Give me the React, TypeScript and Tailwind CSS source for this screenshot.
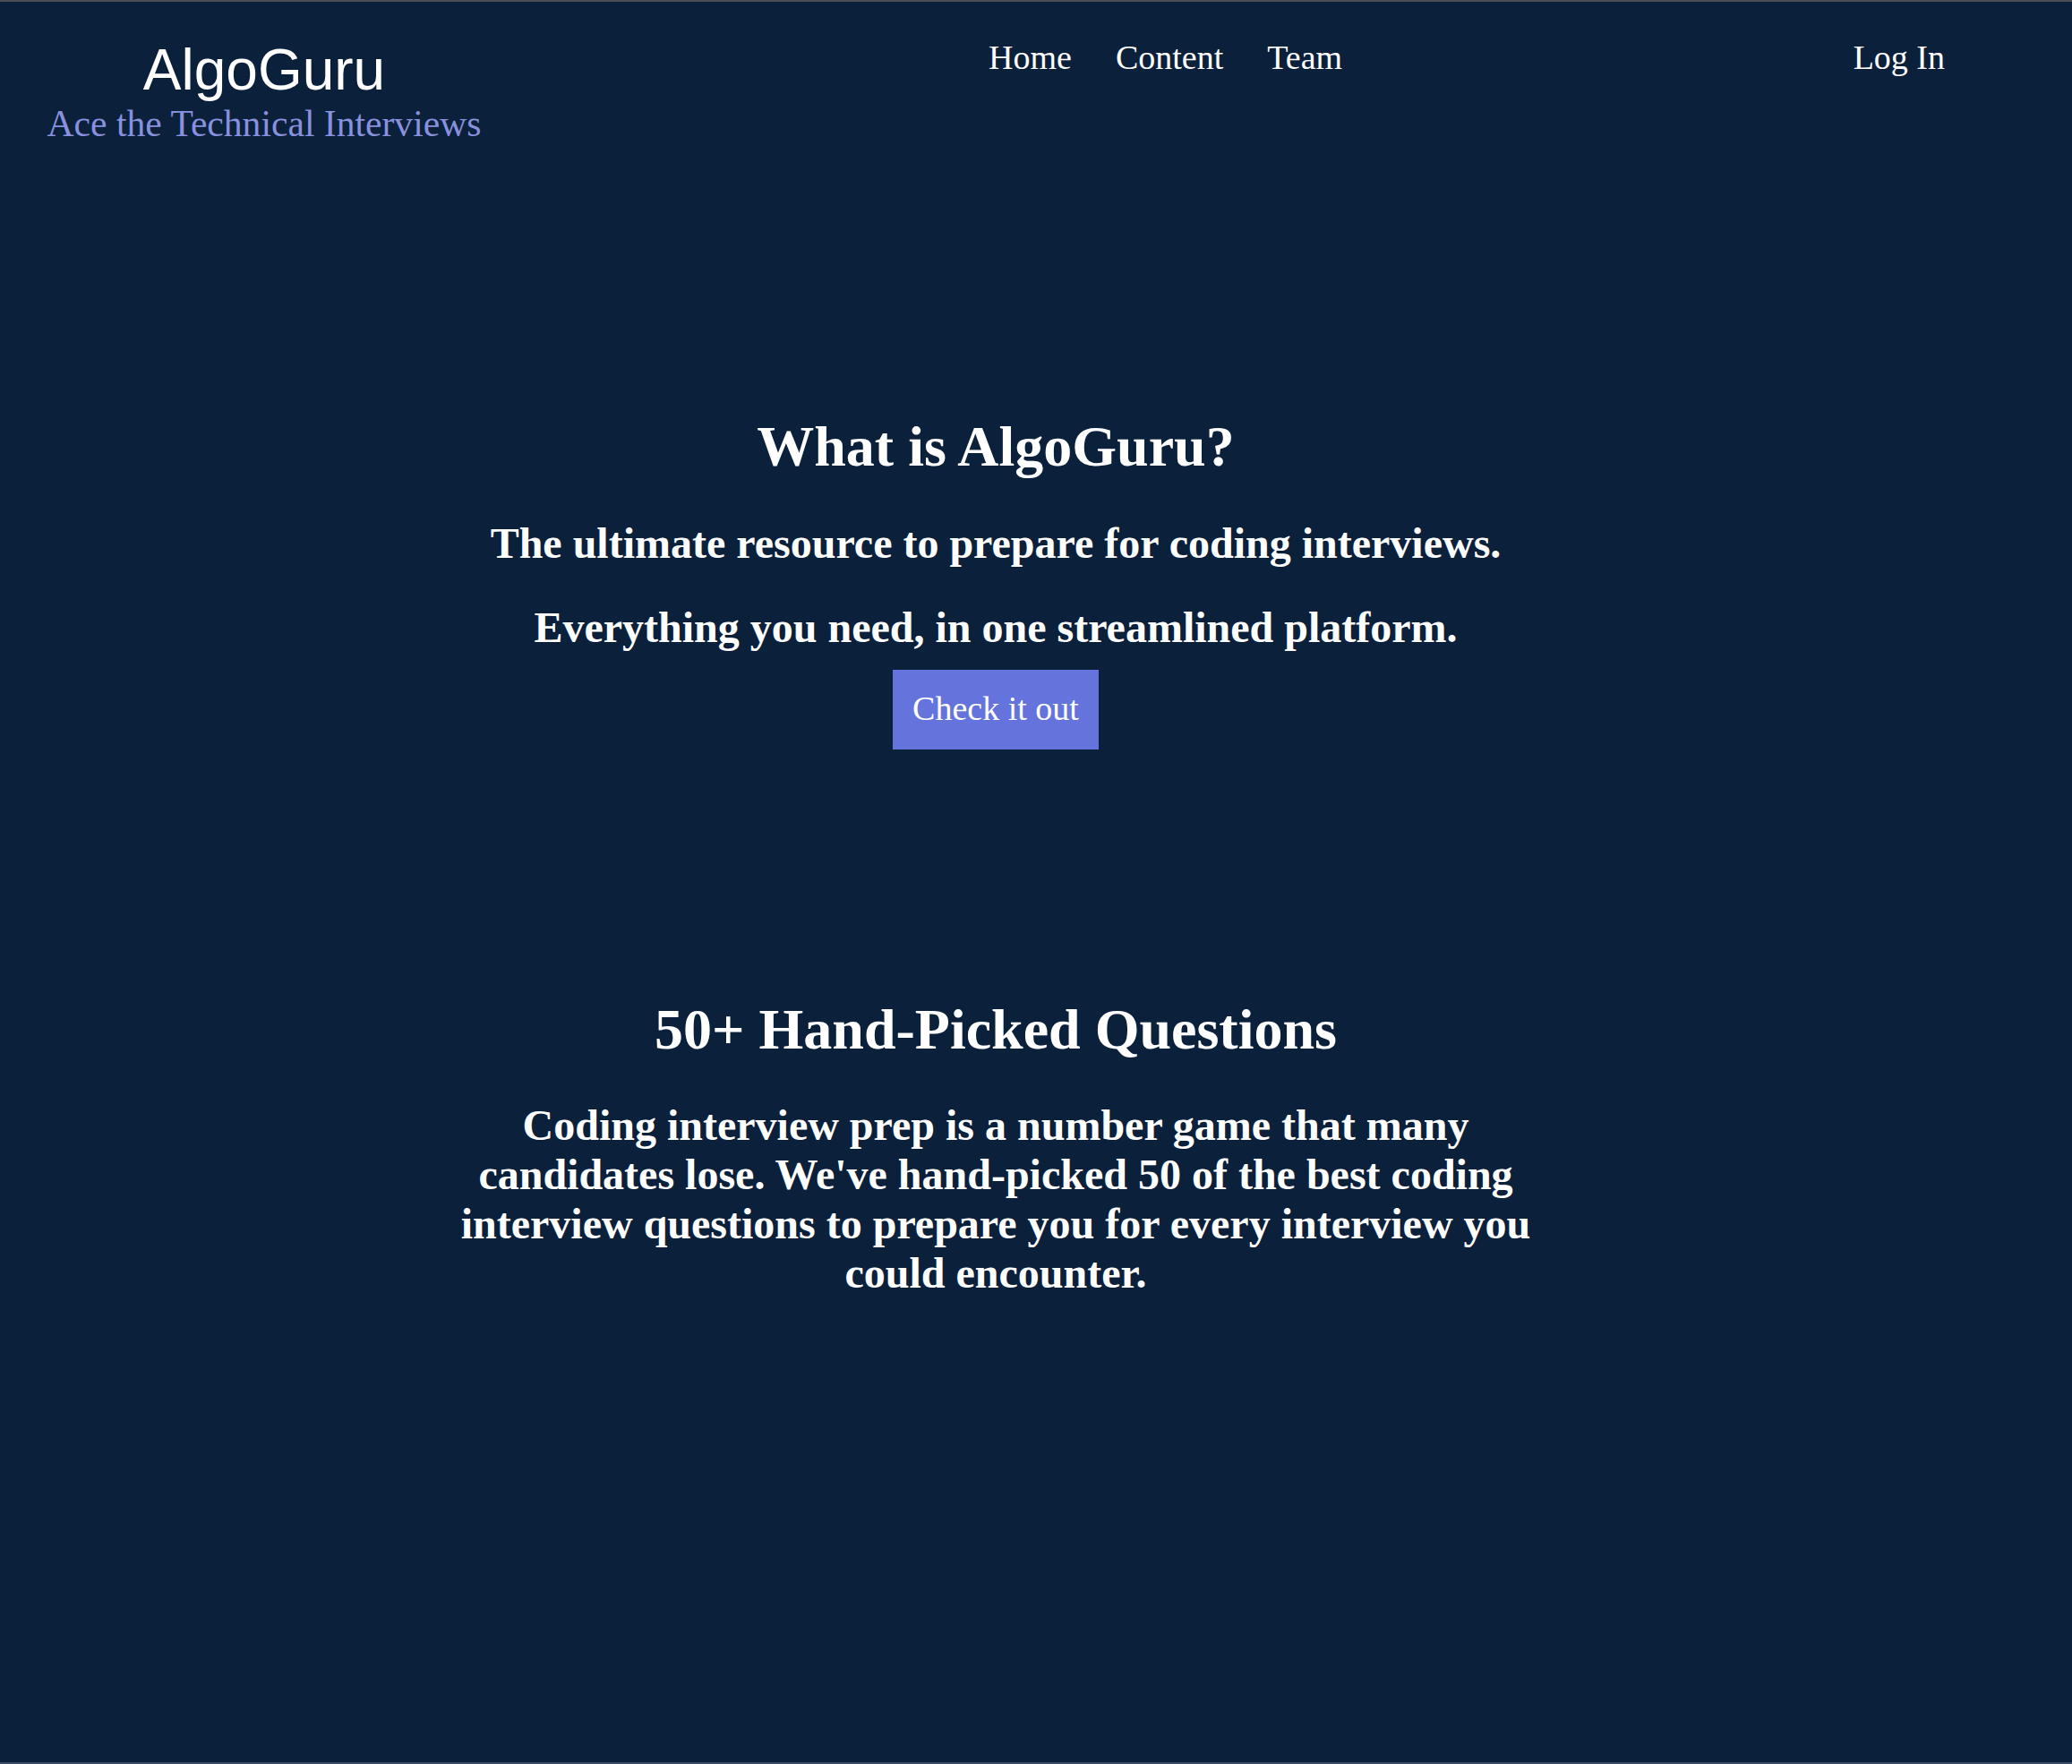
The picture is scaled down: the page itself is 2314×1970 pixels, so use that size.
export default function App() {
  return (
    <div className="flex min-h-[1970px] flex-col border-t-2 border-b-2 border-t-[#4b4e54] border-b-[#3a4c66] bg-[#0b203b] font-['Liberation_Serif','Times_New_Roman',serif] text-white">
      <header className="flex items-start">
        <div className="ml-[52px] w-[486px] pt-[40px] text-center">
          <div className="font-['Liberation_Sans',Arial,sans-serif] text-[64px] leading-[72px]">AlgoGuru</div>
          <div className="mt-[1px] text-[41.6px] leading-[46px] text-[#8891dd]">Ace the Technical Interviews</div>
        </div>
        <nav className="ml-[566px] flex gap-[49px] pt-[40px] text-[38px] leading-[44px]">
          <a href="#">Home</a>
          <a href="#">Content</a>
          <a href="#">Team</a>
        </nav>
        <a href="#" className="ml-auto mr-[142px] pt-[40px] text-[38px] leading-[44px]">
          Log In
        </a>
      </header>

      <main className="flex flex-col items-center pr-[90px] text-center">
        <section className="mt-[302px] flex flex-col items-center">
          <h1 className="text-[64px] font-bold leading-[72px]">What is AlgoGuru?</h1>
          <h2 className="mt-[45px] text-[48px] font-bold leading-[54px]">
            The ultimate resource to prepare for coding interviews.
          </h2>
          <h2 className="mt-[40px] text-[48px] font-bold leading-[54px]">
            Everything you need, in one streamlined platform.
          </h2>
          <button className="mt-[20px] bg-[#6574dc] px-[22px] pt-[21px] pb-[24px] text-[38px] leading-[44px] text-white">
            Check it out
          </button>
        </section>

        <section className="mt-[277px] flex flex-col items-center">
          <h1 className="text-[64px] font-bold leading-[72px]">50+ Hand-Picked Questions</h1>
          <p className="mt-[43px] max-w-[1220px] text-[48px] font-bold leading-[55px]">
            Coding interview prep is a number game that many candidates lose. We've hand-picked 50 of
            the best coding interview questions to prepare you for every interview you could encounter.
          </p>
        </section>
      </main>
    </div>
  );
}
